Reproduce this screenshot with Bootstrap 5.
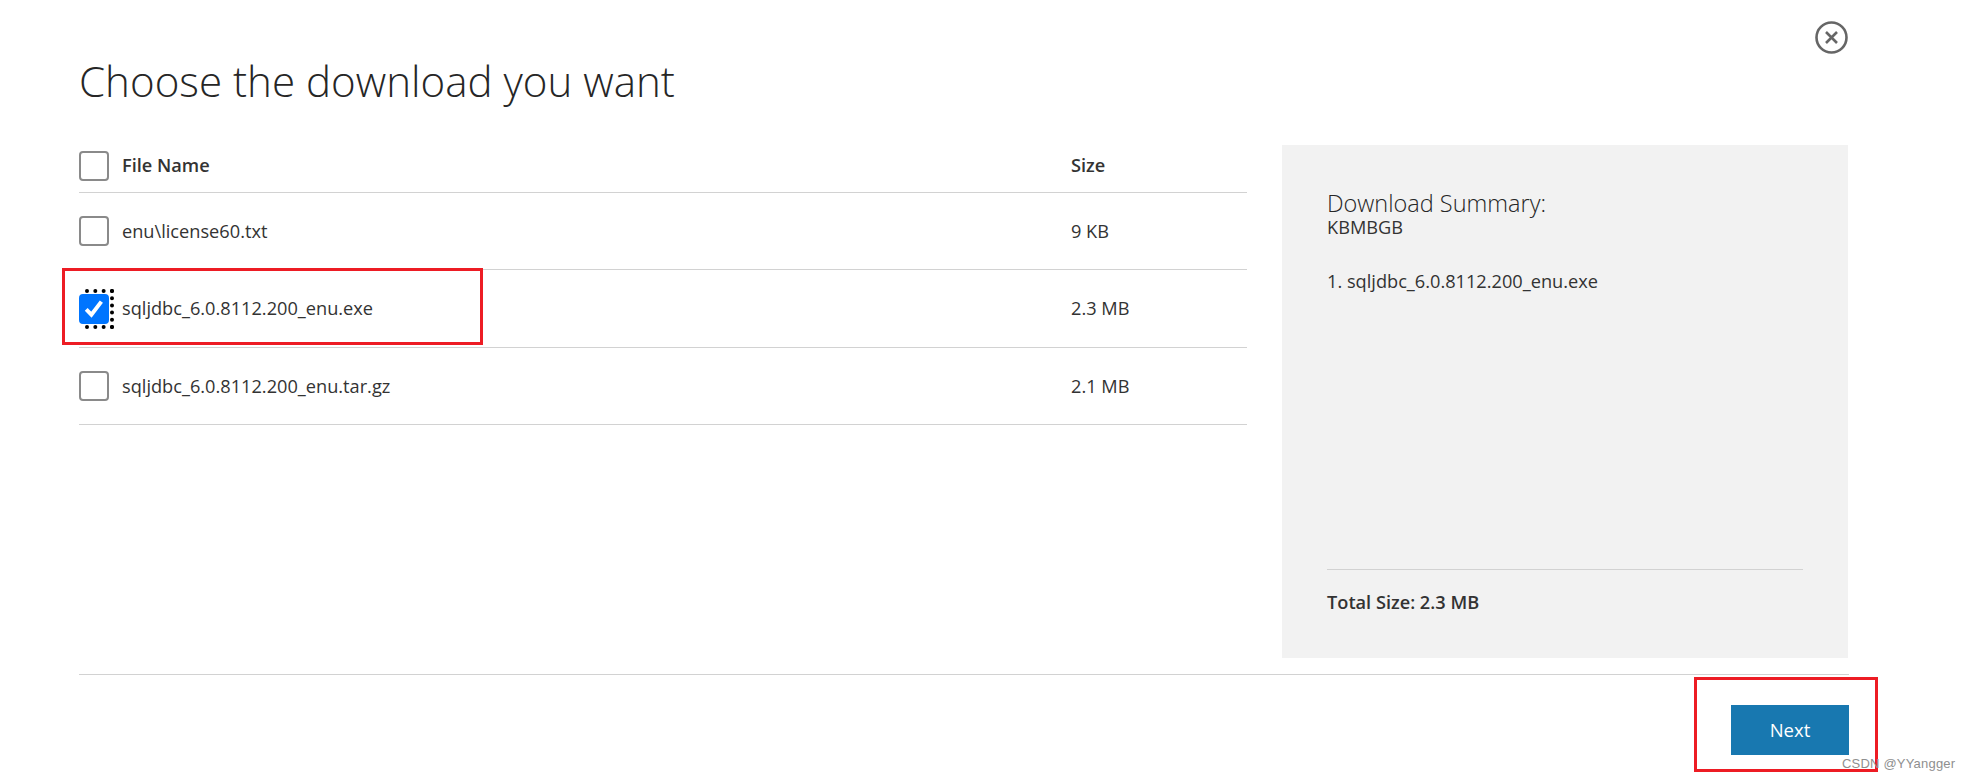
<!DOCTYPE html>
<html lang="en">
<head>
    <meta charset="UTF-8">
    <meta name="viewport" content="width=device-width, initial-scale=1.0">
    <title>Choose the download you want</title>
    <link rel="stylesheet" href="https://cdn.jsdelivr.net/npm/bootstrap@5.3.0/dist/css/bootstrap.min.css">
    <style>
        html, body { height: 100%; }
        body {
            font-family: "Open Sans", "Liberation Sans", sans-serif;
            font-size: 18.2px;
            color: #333;
            background: #fff;
            overflow: hidden;
            position: relative;
        }
        .page-wrap { padding: 21px 117px 0 79px; }
        .close-link { width: 33px; height: 33px; display: block; margin-right: 1px; }
        .page-title {
            font-family: "Open Sans", sans-serif;
            font-weight: 300;
            font-size: 42.1px;
            line-height: 54px;
            color: #262626;
            margin: 0 0 37px;
        }
        .main-row { gap: 35px; height: 513px; }
        .files-col { width: 1168px; flex: none; }
        .files-table { margin: 0; --bs-table-color: #333; --bs-table-border-color: #d2d2d2; }
        .files-table th, .files-table td {
            padding: 0;
            height: 77.5px;
            vertical-align: middle;
            border-bottom: 1.5px solid #d2d2d2;
        }
        .files-table td { padding-top: 1px; }
        .files-table thead th { height: 47px; font-weight: 600; padding-bottom: 5px; }
        .files-table .size-cell { width: 176px; }
        .name-wrap { display: flex; align-items: center; gap: 13px; }
        .file-check.form-check-input {
            width: 30px;
            height: 30px;
            margin: 0;
            flex: none;
            border: 2px solid #8a8a8a;
            border-radius: 4px;
        }
        .file-check.form-check-input:checked {
            background-color: #0075ff;
            border-color: #0075ff;
            background-size: 100% 100%;
            background-image: url("data:image/svg+xml,%3csvg xmlns='http://www.w3.org/2000/svg' viewBox='0 0 30 30'%3e%3cpath fill='none' stroke='%23fff' stroke-width='4.6' d='M6 15.5l6 6L23.5 6.5'/%3e%3c/svg%3e");
        }
        .check-focus { position: relative; display: block; height: 30px; flex: none; }
        .check-focus::after {
            content: "";
            position: absolute;
            left: 6px;
            right: -5px;
            top: -5px;
            bottom: -5px;
            border: 4px dotted #000;
            border-left: 0;
            pointer-events: none;
        }
        .summary-panel {
            width: 566px;
            flex: none;
            background: #f2f2f2;
            padding: 44px 45px 0 45px;
        }
        .summary-title { font-size: 23.5px; line-height: 28px; font-weight: 300; color: #262626; }
        .summary-units { line-height: 20px; }
        .summary-list { margin-top: 32px; line-height: 24px; }
        .summary-foot {
            margin-top: auto;
            border-top: 1.5px solid #d2d2d2;
            height: 89px;
            padding-top: 20px;
            font-weight: 600;
            line-height: 24px;
        }
        .footer-line { border-top: 1.5px solid #d2d2d2; margin-top: 16px; padding-top: 30px; }
        .btn-next {
            --bs-btn-bg: #1878b0;
            --bs-btn-color: #fff;
            --bs-btn-hover-bg: #14689a;
            --bs-btn-hover-color: #fff;
            width: 118px;
            height: 50px;
            border: 0;
            border-radius: 0;
            font-size: 18.5px;
        }
        /* annotations drawn over the screenshot */
        .note-box { position: absolute; border: 3px solid #ed1c24; pointer-events: none; }
        .note-file { left: 62px; top: 268px; width: 421px; height: 77px; }
        .note-next { left: 1694px; top: 677px; width: 184px; height: 95px; }
        .watermark {
            position: absolute;
            left: 1842px;
            top: 756px;
            font-family: "Liberation Sans", sans-serif;
            font-size: 13px;
            line-height: 16px;
            letter-spacing: .2px;
            color: #8f8f8f;
        }
    </style>
</head>
<body>

<div class="page-wrap">
    <div class="d-flex justify-content-end">
        <a href="#" class="close-link" aria-label="Close">
            <svg width="33" height="33" viewBox="0 0 33 33" fill="none" stroke="#666" stroke-width="2.6">
                <circle cx="16.5" cy="16.5" r="15"/>
                <path d="M11 11l11 11M22 11L11 22"/>
            </svg>
        </a>
    </div>
    <h1 class="page-title">Choose the download you want</h1>

    <div class="d-flex main-row">
        <div class="files-col">
            <table class="table files-table">
                <thead>
                    <tr>
                        <th><label class="name-wrap"><input class="form-check-input file-check" type="checkbox">File Name</label></th>
                        <th class="size-cell">Size</th>
                    </tr>
                </thead>
                <tbody>
                    <tr>
                        <td><label class="name-wrap"><input class="form-check-input file-check" type="checkbox">enu\license60.txt</label></td>
                        <td>9 KB</td>
                    </tr>
                    <tr>
                        <td><label class="name-wrap"><span class="check-focus"><input class="form-check-input file-check" type="checkbox" checked></span>sqljdbc_6.0.8112.200_enu.exe</label></td>
                        <td>2.3 MB</td>
                    </tr>
                    <tr>
                        <td><label class="name-wrap"><input class="form-check-input file-check" type="checkbox">sqljdbc_6.0.8112.200_enu.tar.gz</label></td>
                        <td>2.1 MB</td>
                    </tr>
                </tbody>
            </table>
        </div>

        <div class="summary-panel d-flex flex-column">
            <div class="summary-title">Download Summary:</div>
            <div class="summary-units">KBMBGB</div>
            <div class="summary-list">1. sqljdbc_6.0.8112.200_enu.exe</div>
            <div class="summary-foot">Total Size: 2.3 MB</div>
        </div>
    </div>

    <div class="footer-line d-flex justify-content-end">
        <button type="button" class="btn btn-next">Next</button>
    </div>
</div>

<div class="note-box note-file"></div>
<div class="note-box note-next"></div>
<div class="watermark">CSDN @YYangger</div>

<script src="https://cdn.jsdelivr.net/npm/bootstrap@5.3.0/dist/js/bootstrap.bundle.min.js"></script>
</body>
</html>
